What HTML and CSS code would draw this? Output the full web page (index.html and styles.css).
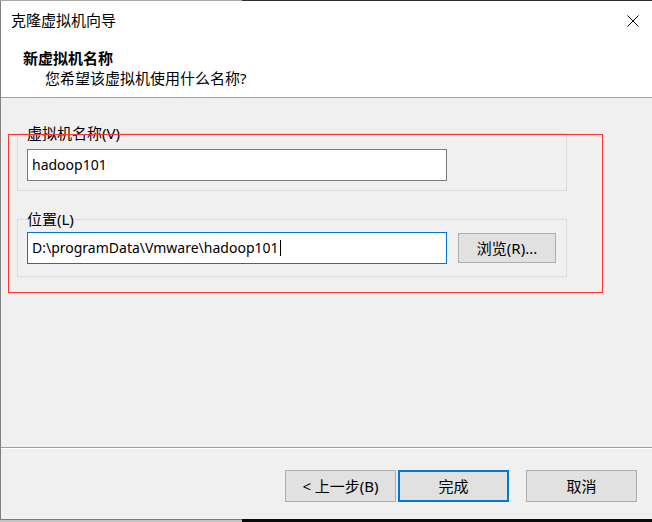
FILE: index.html
```html
<!DOCTYPE html>
<html lang="zh-CN">
<head>
<meta charset="utf-8">
<title>克隆虚拟机向导</title>
<link rel="stylesheet" href="styles.css">
</head>
<body>
<div class="screen">
  <div class="edge-top"><span class="edge-light"></span><span class="edge-dark"></span></div>
  <div class="window">
    <header class="header">
      <div class="titlebar">
        <span class="title">克隆虚拟机向导</span>
        <span class="close" aria-label="关闭">
          <svg width="12" height="12" viewBox="0 0 12 12"><path d="M0.5 0.5 L11.5 11.5 M11.5 0.5 L0.5 11.5" stroke="#000" stroke-width="1" fill="none"/></svg>
        </span>
      </div>
      <div class="heading">
        <div class="h-main">新虚拟机名称</div>
        <div class="h-sub">您希望该虚拟机使用什么名称?</div>
      </div>
    </header>
    <main class="content">
      <fieldset class="group g1">
        <legend>虚拟机名称(V)</legend>
        <div class="field">hadoop101</div>
      </fieldset>
      <fieldset class="group g2">
        <legend>位置(L)</legend>
        <div class="row">
          <div class="field focus">D:\programData\Vmware\hadoop101<span class="caret"></span></div>
          <button class="btn browse">浏览(R)...</button>
        </div>
      </fieldset>
      <div class="annot"></div>
    </main>
    <footer class="footer">
      <button class="btn">&lt; 上一步(B)</button>
      <button class="btn primary">完成</button>
      <button class="btn cancel">取消</button>
    </footer>
  </div>
  <div class="edge-bottom"><span class="eb-light"></span><span class="eb-dark"></span></div>
</div>
</body>
</html>
```

FILE: styles.css
```css
* { box-sizing: border-box; }
html, body { margin: 0; padding: 0; }
body {
  background: #f0f0f0;
  font-family: "Noto Sans", "Noto Sans CJK SC", sans-serif;
  font-size: 15px;
  color: #000;
}
.screen {
  width: 652px;
  height: 522px;
  display: flex;
  flex-direction: column;
  overflow: hidden;
}
.edge-top { display: flex; height: 1px; flex: none; }
.edge-light { width: 242px; background: #a8a8a8; }
.edge-dark { flex: 1; background: #2e2e2e; }
.edge-bottom { display: flex; height: 3px; flex: none; }
.eb-light { width: 242px; background: #c4c4c4; border-top: 1px solid #7a7a7a; }
.eb-dark { flex: 1; background: #0a0a0a; }

.window {
  flex: 1;
  display: flex;
  flex-direction: column;
  border-left: 1px solid #808080;
  background: #f0f0f0;
  position: relative;
}
.header {
  flex: none;
  height: 97px;
  background: #fff;
  border-bottom: 1px solid #a0a0a0;
}
.titlebar {
  display: flex;
  justify-content: space-between;
  align-items: center;
  padding: 9px 13px 0 10px;
  height: 29px;
  line-height: 20px;
}
.close { display: flex; width: 12px; height: 12px; margin-top: 1px; }
.heading { padding: 18px 0 0 22px; line-height: 20px; }
.h-main { font-weight: bold; }
.h-sub { padding-left: 22px; }

.content {
  flex: 1;
  padding-top: 27px;
}
.group {
  margin: 0 0 0 16px;
  width: 550px;
  border: 1px solid #dcdcdc;
  padding: 8px 9px 9px 9px;
  min-width: 0;
}
.group legend {
  padding: 0;
  line-height: 16px;
  height: 16px;
}
.g2 { margin-top: 20px; padding-top: 5px; padding-bottom: 12px; }
.row { display: flex; align-items: center; }
.field {
  width: 420px;
  height: 32px;
  border: 1px solid #7a7a7a;
  background: #fff;
  padding-left: 4px;
  font-size: 14px;
  line-height: 30px;
  white-space: nowrap;
  display: flex;
  align-items: center;
}
.field.focus { border-color: #0078d7; }
.caret {
  display: inline-block;
  width: 1px;
  height: 16px;
  background: #000;
  margin-left: 1px;
}
.btn {
  font: inherit;
  color: #000;
  background: #e1e1e1;
  border: 1px solid #adadad;
  padding: 0;
  height: 32px;
  width: 111px;
  line-height: 28px;
  border-radius: 0;
}
.browse { width: 98px; height: 30px; margin-left: 11px; }
.annot {
  position: absolute;
  left: 7px;
  top: 133px;
  width: 595px;
  height: 159px;
  border: 1px solid #ff3434;
  pointer-events: none;
}
.footer {
  flex: none;
  height: 72px;
  border-top: 1px solid #a0a0a0;
  box-shadow: inset 0 1px 0 #fff;
  display: flex;
  justify-content: flex-end;
  align-items: flex-start;
  padding: 22px 15px 0 0;
  gap: 2px;
}
.btn.primary { border: 2px solid #0078d7; }
.btn.cancel { margin-left: 15px; }
```
